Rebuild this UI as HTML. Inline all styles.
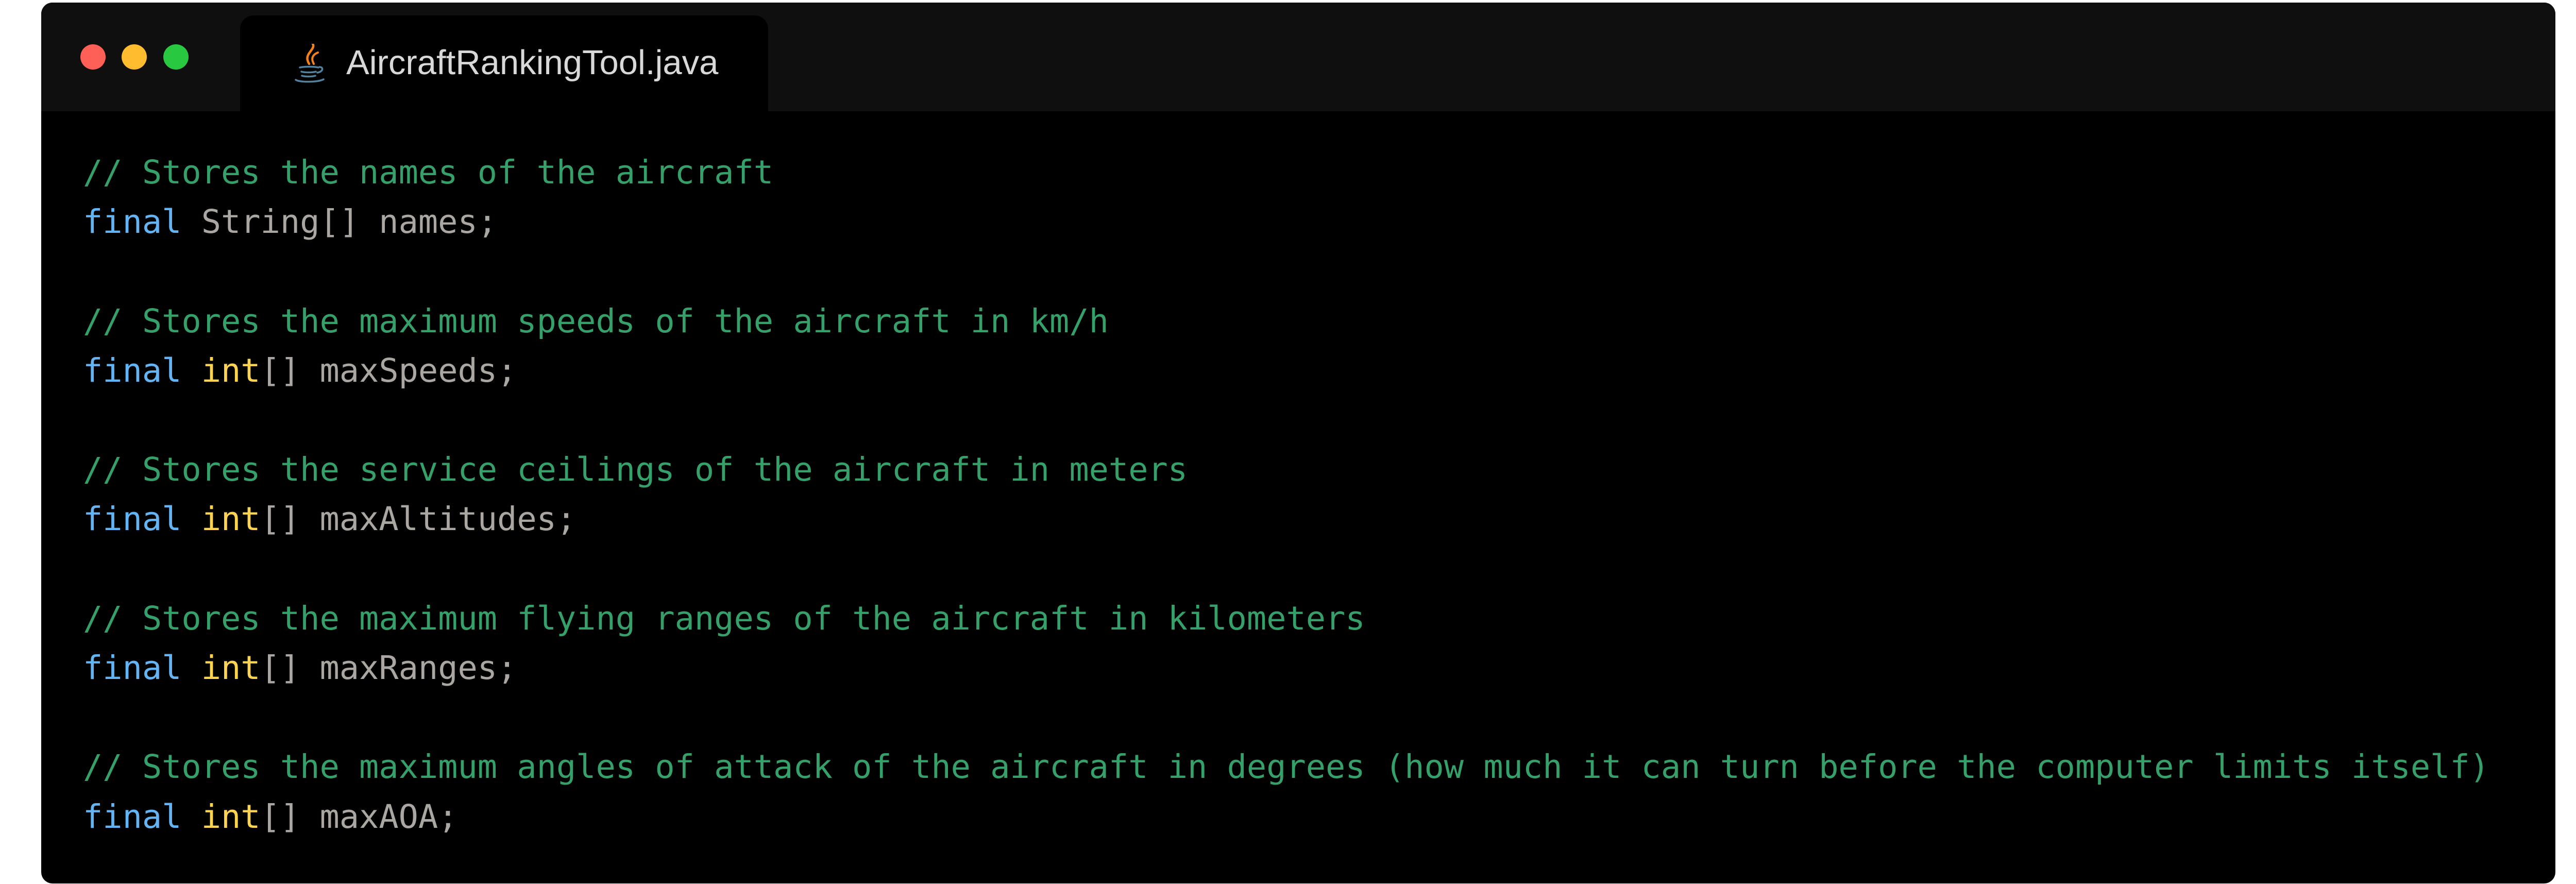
<!DOCTYPE html>
<html><head><meta charset="utf-8"><style>
html,body{margin:0;padding:0;background:#fff;width:5040px;height:1716px;overflow:hidden}
.win{position:absolute;left:80px;top:5px;width:4880px;height:1710px;background:#000;border-radius:22px;overflow:hidden}
.bar{position:absolute;left:0;top:0;width:100%;height:211px;background:#0f0f0f}
.dot{position:absolute;top:81px;width:49px;height:49px;border-radius:50%}
.tab{position:absolute;left:386px;top:25px;width:1025px;height:190px;background:#000;border-radius:26px 26px 0 0}
.title{position:absolute;left:592px;top:82px;font:67px "Liberation Sans",sans-serif;color:#d8d8d8;line-height:70px;white-space:nowrap}
pre{position:absolute;left:81px;top:281px;margin:0;font:63.6px "DejaVu Sans Mono",monospace;line-height:96.2px;color:#aaa6a2}
.c{color:#35a06a}.k{color:#62b4f4}.t{color:#fcd452}
</style></head><body>
<div class="win">
<div class="bar"></div>
<div class="dot" style="left:76px;background:#fe5f57"></div>
<div class="dot" style="left:156px;background:#febc2e"></div>
<div class="dot" style="left:237px;background:#28c840"></div>
<div class="tab"></div>
<svg style="position:absolute;left:492px;top:80px" width="58" height="78" viewBox="0 0 58 78">
<path d="M35 0c6 10-14 18-10 32 1 4 3 7 3 7" stroke="#f58219" stroke-width="4.5" fill="none" stroke-linecap="round"/>
<path d="M45 17c-10 4-14 11-8 22" stroke="#f58219" stroke-width="4" fill="none" stroke-linecap="round"/>
<path d="M10 46c8-2 28-2 36 0M13 54c6 2 22 2 28 0M14 62c6 2 20 2 26 0M48 45c8 0 8 9-4 11M2 70c8 5 42 5 54-1" stroke="#5382a1" stroke-width="3.5" fill="none" stroke-linecap="round"/>
</svg>
<div class="title">AircraftRankingTool.java</div>
<pre><span class="c">// Stores the names of the aircraft</span>
<span class="k">final</span> String[] names;

<span class="c">// Stores the maximum speeds of the aircraft in km/h</span>
<span class="k">final</span> <span class="t">int</span>[] maxSpeeds;

<span class="c">// Stores the service ceilings of the aircraft in meters</span>
<span class="k">final</span> <span class="t">int</span>[] maxAltitudes;

<span class="c">// Stores the maximum flying ranges of the aircraft in kilometers</span>
<span class="k">final</span> <span class="t">int</span>[] maxRanges;

<span class="c">// Stores the maximum angles of attack of the aircraft in degrees (how much it can turn before the computer limits itself)</span>
<span class="k">final</span> <span class="t">int</span>[] maxAOA;</pre>
</div>
</body></html>
